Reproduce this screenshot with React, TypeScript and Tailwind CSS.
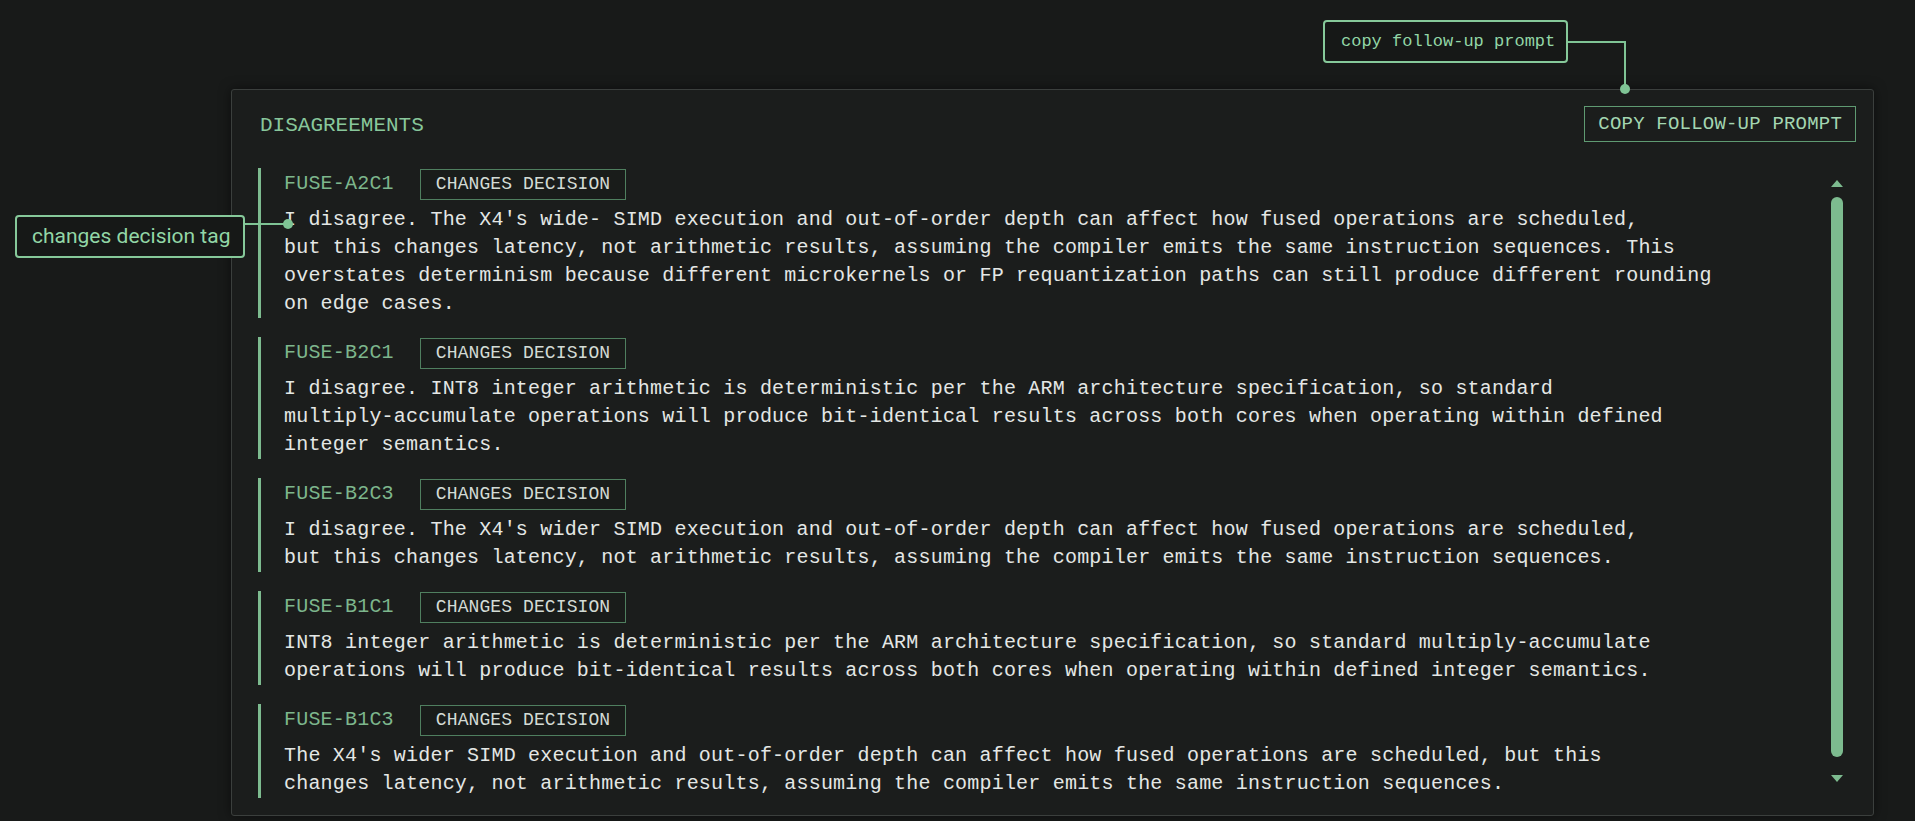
import React from 'react';

type Entry = { id: string; lines: string[] };

const entries: Entry[] = [
  {
    id: 'FUSE-A2C1',
    lines: [
      "I disagree. The X4's wide- SIMD execution and out-of-order depth can affect how fused operations are scheduled,",
      'but this changes latency, not arithmetic results, assuming the compiler emits the same instruction sequences. This',
      'overstates determinism because different microkernels or FP requantization paths can still produce different rounding',
      'on edge cases.',
    ],
  },
  {
    id: 'FUSE-B2C1',
    lines: [
      'I disagree. INT8 integer arithmetic is deterministic per the ARM architecture specification, so standard',
      'multiply-accumulate operations will produce bit-identical results across both cores when operating within defined',
      'integer semantics.',
    ],
  },
  {
    id: 'FUSE-B2C3',
    lines: [
      "I disagree. The X4's wider SIMD execution and out-of-order depth can affect how fused operations are scheduled,",
      'but this changes latency, not arithmetic results, assuming the compiler emits the same instruction sequences.',
    ],
  },
  {
    id: 'FUSE-B1C1',
    lines: [
      'INT8 integer arithmetic is deterministic per the ARM architecture specification, so standard multiply-accumulate',
      'operations will produce bit-identical results across both cores when operating within defined integer semantics.',
    ],
  },
  {
    id: 'FUSE-B1C3',
    lines: [
      "The X4's wider SIMD execution and out-of-order depth can affect how fused operations are scheduled, but this",
      'changes latency, not arithmetic results, assuming the compiler emits the same instruction sequences.',
    ],
  },
];

const mono = "font-['Liberation_Mono','DejaVu_Sans_Mono',monospace]";

function EntryRow({ entry }: { entry: Entry }) {
  return (
    <div className="flex border-l-[3px] border-[#7dbb8f] pl-[23px]">
      <div className="flex flex-col">
        <div className="flex h-[32px] items-center gap-[26px]">
          <span className={`${mono} text-[20px] tracking-[0.2px] text-[#7db68c]`}>{entry.id}</span>
          <span
            className={`${mono} flex h-[31px] items-center border-[1.5px] border-[#4f7f5f] bg-[#191c1a] px-[15px] text-[18px] tracking-[0.1px] text-[#d3dbd5]`}
          >
            CHANGES DECISION
          </span>
        </div>
        <div className="mt-[6px] flex flex-col">
          {entry.lines.map((line, i) => (
            <div
              key={i}
              className={`${mono} h-[28px] whitespace-pre text-[20px] leading-[28px] tracking-[0.2px] text-[#e4e7e5]`}
            >
              {line}
            </div>
          ))}
        </div>
      </div>
    </div>
  );
}

export default function App() {
  return (
    <div className="relative h-[821px] w-[1915px] overflow-hidden bg-[#181a19] pl-[231px] pt-[89px]">
      {/* main panel */}
      <div className="flex h-[727px] w-[1643px] flex-col rounded-[3px] border border-[#3b3f3d] bg-[#1b1d1c] shadow-[0_0_12px_rgba(0,0,0,0.5)]">
        <div className="flex items-center justify-between pl-[28px] pr-[17px] pt-[16px]">
          <h2 className={`${mono} mt-[3px] text-[21px] tracking-[0px] text-[#88c79b]`}>DISAGREEMENTS</h2>
          <button
            className={`${mono} flex h-[36px] items-center border-[1.5px] border-[#5f9a72] px-[13px] text-[19px] tracking-[0.2px] text-[#a3d6b1]`}
          >
            COPY FOLLOW-UP PROMPT
          </button>
        </div>

        <div className="mt-[26px] flex flex-1">
          <div className="flex flex-1 flex-col gap-[19px] pl-[26px]">
            {entries.map((e) => (
              <EntryRow key={e.id} entry={e} />
            ))}
          </div>

          {/* scrollbar */}
          <div className="mr-[30px] flex w-[12px] flex-col items-center pt-[12px]">
            <div className="h-0 w-0 border-x-[6px] border-b-[7px] border-x-transparent border-b-[#7dbb8f]" />
            <div className="mt-[10px] h-[560px] w-[12px] rounded-full bg-[#7dbb8f]" />
            <div className="mt-[18px] h-0 w-0 border-x-[6px] border-t-[7px] border-x-transparent border-t-[#7dbb8f]" />
          </div>
        </div>
      </div>

      {/* callout: copy follow-up prompt */}
      <div className="absolute left-[1323px] top-[20px] flex h-[43px] w-[245px] items-center rounded-[4px] border-2 border-[#86c99a] bg-[#161817] pl-[16px]">
        <span className={`${mono} text-[17px] text-[#92d6a6]`}>copy follow-up prompt</span>
      </div>
      <div className="absolute left-[1568px] top-[41px] h-[2px] w-[58px] bg-[#7fc495]" />
      <div className="absolute left-[1624px] top-[41px] h-[48px] w-[2px] bg-[#7fc495]" />
      <div className="absolute left-[1620px] top-[84px] h-[10px] w-[10px] rounded-full bg-[#7fc495]" />

      {/* callout: changes decision tag */}
      <div className="absolute left-[15px] top-[215px] flex h-[43px] w-[230px] items-center rounded-[4px] border-2 border-[#86c99a] bg-[#161817] pl-[15px]">
        <span className="font-['Roboto','Noto_Sans',sans-serif] text-[21px] text-[#92d6a6]">changes decision tag</span>
      </div>
      <div className="absolute left-[245px] top-[223px] h-[2px] w-[43px] bg-[#7fc495]" />
      <div className="absolute left-[283px] top-[219px] h-[10px] w-[10px] rounded-full bg-[#7fc495]" />
    </div>
  );
}
